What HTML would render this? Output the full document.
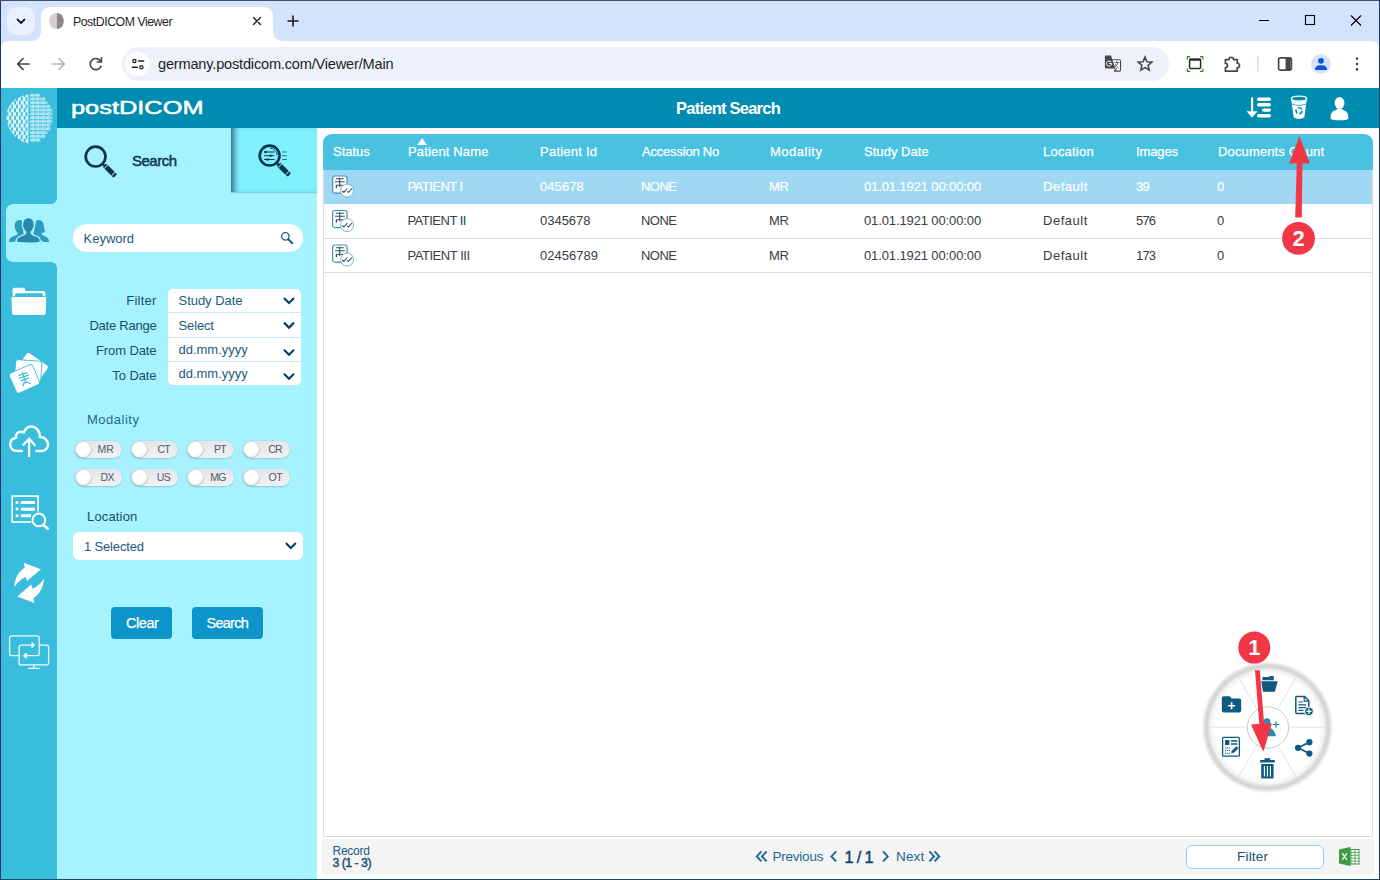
<!DOCTYPE html>
<html lang="en">
<head>
<meta charset="utf-8">
<title>PostDICOM Viewer</title>
<style>
*{box-sizing:border-box;margin:0;padding:0}
html,body{width:1380px;height:880px;overflow:hidden;background:#fff}
body{font-family:"Liberation Sans",sans-serif;position:relative;color:#1f1f1f}
body>div,body>svg{position:absolute}
.t{position:absolute;line-height:1;white-space:nowrap;transform:translateY(-0.8465em)}
.r{transform:translate(-100%,-0.8465em)}
/* ---------- browser chrome ---------- */
#tabstrip{left:0;top:0;width:1380px;height:52px;background:#d3e3fd}
#toolbar{left:1px;top:41px;width:1378px;height:47px;background:#fff;border-radius:7px 7px 0 0}
#winL{left:0;top:0;width:1px;height:880px;background:#1b3a63}
#winT{left:0;top:0;width:1380px;height:1px;background:#3f506b}
#winR{left:1379px;top:0;width:1px;height:880px;background:#1b3a63}
#winB{left:0;top:879px;width:1380px;height:1px;background:#134a66}
#tabsearch{left:7px;top:7px;width:28px;height:28px;border-radius:10px;background:#eaf1fe}
#tab{left:41px;top:7px;width:232px;height:34px;background:#fff;border-radius:9px 9px 0 0}
#tab:before,#tab:after{content:"";position:absolute;bottom:0;width:9px;height:9px}
#tab:before{left:-9px;background:radial-gradient(circle at 0 0,transparent 8.5px,#fff 9px)}
#tab:after{right:-9px;background:radial-gradient(circle at 100% 0,transparent 8.5px,#fff 9px)}
#omni{left:122px;top:47px;width:1047px;height:34px;border-radius:17px;background:#edf1fa}
#omnichip{left:125.200px;top:52px;width:24.400px;height:24.400px;border-radius:12.200px;background:#fff}
/* ---------- app ---------- */
#side{left:1px;top:88px;width:56px;height:791px;background:#38bddd}
#hdr{left:57px;top:88px;width:1322px;height:40px;background:#008cb0}
#panel{left:57px;top:128px;width:260px;height:751px;background:#a6f2fe}
#tab2{left:231px;top:128px;width:86px;height:64px;background:#7ff1fd;box-shadow:inset 7px 0 6px -4px rgba(0,50,70,.7),0 1px 1px rgba(0,60,80,.2)}
#sact{left:5.5px;top:204px;width:52.5px;height:58px;background:#a6f2fe;border-radius:7px 0 0 7px}
#tbl{left:322.500px;top:133.600px;width:1050.500px;height:703.400px;border:1px solid #d9dee2;border-radius:9px 9px 0 0;background:#fff}
#thead{left:322.500px;top:133.600px;width:1050.500px;height:36.400px;background:#48c2e0;border-radius:9px 9px 0 0}
.row{left:323.500px;width:1048.500px;height:35px;border-bottom:1px solid #d9dee2}
#row1{top:170px;height:33.500px;background:#a0d8f3;border-bottom:none}
#foot{left:322px;top:839px;width:1052px;height:35px;background:#f4f4f4}
.h{color:#fff;font-size:13px;-webkit-text-stroke:0.25px #fff}
.c{color:#383d44;font-size:13px}
.w{color:#fff;-webkit-text-stroke:0.2px #fff}
.l{color:#17506c;font-size:13px}
.v{color:#1b5a7e;font-size:13px}
.btn{background:#0d94c9;border-radius:4px}
.pill{width:47px;height:16.5px;border-radius:8.5px;background:linear-gradient(#e4e6e8,#f1f2f3);box-shadow:0 0.5px 1.5px rgba(0,40,60,.3)}
.pill:before{content:"";position:absolute;left:0.5px;top:0.5px;width:15.5px;height:15.5px;border-radius:8px;background:radial-gradient(circle at 40% 35%,#fff 50%,#e9e9e9 100%);box-shadow:0 0.5px 2px rgba(0,0,0,.4)}
.pt{font-size:10.5px;color:#4a6070}
</style>
</head>
<body>
<!-- ================= browser chrome ================= -->
<div id="tabstrip"></div>
<div id="tabsearch"></div>
<div id="tab"></div>
<div id="toolbar"></div>
<div id="omni"></div>
<div id="omnichip"></div>
<div class="t" style="left:73px;top:26px;font-size:12.3px;color:#1f1f1f;letter-spacing:-0.46px">PostDICOM Viewer</div>
<div class="t" style="left:158px;top:69px;font-size:14.6px;color:#1f1f1f;letter-spacing:-0.20px">germany.postdicom.com/Viewer/Main</div>

<!-- ================= app backgrounds ================= -->
<div id="side"></div>
<div id="sact"></div>
<div id="hdr"></div>
<div id="panel"></div>
<div id="tab2"></div>
<div id="tbl"></div>
<div id="thead"></div>
<div class="row" id="row1"></div>
<div class="row" style="top:204px"></div>
<div class="row" style="top:238px"></div>
<div id="foot"></div>
<!-- ================= app text ================= -->
<div class="t" id="brand" style="left:71.4px;top:113.600px;font-size:18px;color:#fff;-webkit-text-stroke:0.5px #fff;transform-origin:0 0;transform:translateY(-0.8465em) scaleX(1.41)">postDICOM</div>
<div class="t" style="left:676px;top:114px;font-size:16.5px;font-weight:bold;color:#fff;letter-spacing:-0.76px">Patient Search</div>
<div class="t" style="left:132px;top:166px;font-size:15px;-webkit-text-stroke:0.45px #0c3550;color:#0c3550;letter-spacing:-0.51px">Search</div>

<div class="t h" style="left:333px;top:156px;letter-spacing:-0.03px">Status</div>
<div class="t h" style="left:408px;top:156px;letter-spacing:0.15px">Patient Name</div>
<div class="t h" style="left:540px;top:156px;letter-spacing:0.24px">Patient Id</div>
<div class="t h" style="left:642px;top:156px;letter-spacing:-0.20px">Accession No</div>
<div class="t h" style="left:770px;top:156px;letter-spacing:0.51px">Modality</div>
<div class="t h" style="left:864px;top:156px;letter-spacing:0.04px">Study Date</div>
<div class="t h" style="left:1043px;top:156px;letter-spacing:0.21px">Location</div>
<div class="t h" style="left:1136px;top:156px;letter-spacing:-0.13px">Images</div>
<div class="t h" style="left:1218px;top:156px;letter-spacing:0.14px">Documents Count</div>

<div class="t c w" style="left:407.4px;top:190.5px;letter-spacing:-0.52px">PATIENT I</div>
<div class="t c w" style="left:540px;top:190.5px;letter-spacing:0.08px">045678</div>
<div class="t c w" style="left:641px;top:190.5px;letter-spacing:-0.52px">NONE</div>
<div class="t c w" style="left:769px;top:190.5px;letter-spacing:-0.42px">MR</div>
<div class="t c w" style="left:864px;top:190.5px;letter-spacing:-0.12px">01.01.1921 00:00:00</div>
<div class="t c w" style="left:1043px;top:190.5px;letter-spacing:0.52px">Default</div>
<div class="t c w" style="left:1136px;top:190.5px;letter-spacing:-0.70px">39</div>
<div class="t c w" style="left:1217px;top:190.5px">0</div>

<div class="t c" style="left:407.4px;top:225px;letter-spacing:-0.50px">PATIENT II</div>
<div class="t c" style="left:540px;top:225px;letter-spacing:-0.02px">0345678</div>
<div class="t c" style="left:641px;top:225px;letter-spacing:-0.52px">NONE</div>
<div class="t c" style="left:769px;top:225px;letter-spacing:-0.42px">MR</div>
<div class="t c" style="left:864px;top:225px;letter-spacing:-0.12px">01.01.1921 00:00:00</div>
<div class="t c" style="left:1043px;top:225px;letter-spacing:0.52px">Default</div>
<div class="t c" style="left:1136px;top:225px;letter-spacing:-0.85px">576</div>
<div class="t c" style="left:1217px;top:225px">0</div>

<div class="t c" style="left:407.4px;top:259.5px;letter-spacing:-0.45px">PATIENT III</div>
<div class="t c" style="left:540px;top:259.5px;letter-spacing:0.01px">02456789</div>
<div class="t c" style="left:641px;top:259.5px;letter-spacing:-0.52px">NONE</div>
<div class="t c" style="left:769px;top:259.5px;letter-spacing:-0.42px">MR</div>
<div class="t c" style="left:864px;top:259.5px;letter-spacing:-0.12px">01.01.1921 00:00:00</div>
<div class="t c" style="left:1043px;top:259.5px;letter-spacing:0.52px">Default</div>
<div class="t c" style="left:1136px;top:259.5px;letter-spacing:-0.85px">173</div>
<div class="t c" style="left:1217px;top:259.5px">0</div>

<div class="t" style="left:332.5px;top:855px;font-size:12px;color:#1d5a80;letter-spacing:-0.24px">Record</div>
<div class="t" style="left:332.5px;top:867px;font-size:12.3px;-webkit-text-stroke:0.4px #164a6a;color:#164a6a;letter-spacing:-0.51px">3 (1 - 3)</div>
<div class="t" style="left:772.5px;top:861px;font-size:13.5px;color:#1a6890;letter-spacing:-0.23px">Previous</div>
<div class="t" style="left:844.5px;top:862.5px;font-size:16.3px;-webkit-text-stroke:0.45px #0f4866;color:#0f4866;letter-spacing:-0.65px">1 / 1</div>
<div class="t" style="left:896px;top:861px;font-size:13.5px;color:#1a6890;letter-spacing:0.14px">Next</div>
<div style="left:1186px;top:845px;width:138px;height:24px;border:1px solid #8fd4f7;border-radius:6px;background:#fff"></div>
<div class="t" style="left:1237px;top:861px;font-size:13.5px;color:#17506c;letter-spacing:0.20px">Filter</div>

<!-- ================= search form ================= -->
<div style="left:73px;top:224px;width:230px;height:28px;border-radius:14px;background:#fff"></div>
<div class="t v" style="left:83.5px;top:243px;letter-spacing:0.00px">Keyword</div>
<div style="left:168px;top:289px;width:133px;height:96px;border-radius:5px;background:#fff"></div>
<div style="left:168px;top:312px;width:133px;height:1px;background:#bfeaff"></div>
<div style="left:168px;top:336.700px;width:133px;height:1px;background:#bfeaff"></div>
<div style="left:168px;top:361px;width:133px;height:1px;background:#bfeaff"></div>
<div class="t l r" style="left:156.5px;top:304.5px;letter-spacing:0.22px">Filter</div>
<div class="t l r" style="left:156.5px;top:330px;letter-spacing:-0.23px">Date Range</div>
<div class="t l r" style="left:156.5px;top:354.5px;letter-spacing:-0.09px">From Date</div>
<div class="t l r" style="left:156.5px;top:379.5px;letter-spacing:-0.09px">To Date</div>
<div class="t v" style="left:178.5px;top:304.5px;letter-spacing:-0.03px">Study Date</div>
<div class="t v" style="left:178.5px;top:330px;letter-spacing:-0.13px">Select</div>
<div class="t v" style="left:178.5px;top:353.5px;letter-spacing:-0.02px">dd.mm.yyyy</div>
<div class="t v" style="left:178.5px;top:377.5px;letter-spacing:-0.02px">dd.mm.yyyy</div>
<div class="t" style="left:87px;top:424px;font-size:13px;color:#1d6a8e;letter-spacing:0.50px">Modality</div>
<div class="pill" style="left:75.3px;top:441px"></div>
<div class="pill" style="left:131px;top:441px"></div>
<div class="pill" style="left:187px;top:441px"></div>
<div class="pill" style="left:243px;top:441px"></div>
<div class="pill" style="left:75.3px;top:469px"></div>
<div class="pill" style="left:131px;top:469px"></div>
<div class="pill" style="left:187px;top:469px"></div>
<div class="pill" style="left:243px;top:469px"></div>
<div class="t pt r" style="left:114px;top:453px;letter-spacing:0.06px">MR</div>
<div class="t pt r" style="left:170px;top:453px;letter-spacing:-0.70px">CT</div>
<div class="t pt r" style="left:226px;top:453px;letter-spacing:-0.70px">PT</div>
<div class="t pt r" style="left:282px;top:453px;letter-spacing:-0.70px">CR</div>
<div class="t pt r" style="left:114px;top:481px;letter-spacing:-0.49px">DX</div>
<div class="t pt r" style="left:170px;top:481px;letter-spacing:-0.69px">US</div>
<div class="t pt r" style="left:226px;top:481px;letter-spacing:-0.52px">MG</div>
<div class="t pt r" style="left:282px;top:481px;letter-spacing:-0.59px">OT</div>
<div class="t" style="left:87px;top:521px;font-size:13px;color:#17506c;letter-spacing:0.16px">Location</div>
<div style="left:73px;top:532px;width:230px;height:28px;border-radius:6px;background:#fff"></div>
<div class="t v" style="left:84px;top:550.7px;letter-spacing:-0.16px">1 Selected</div>
<div class="btn" style="left:111px;top:607px;width:61px;height:32px"></div>
<div class="btn" style="left:192px;top:607px;width:71px;height:32px"></div>
<div class="t" style="left:126px;top:628px;font-size:14.5px;color:#fff;-webkit-text-stroke:0.25px #fff;letter-spacing:-0.44px">Clear</div>
<div class="t" style="left:206.5px;top:628px;font-size:14.5px;color:#fff;-webkit-text-stroke:0.25px #fff;letter-spacing:-0.75px">Search</div>

<svg width="1380" height="880" viewBox="0 0 1380 880" style="left:0;top:0" fill="none">
<g id="chrome-icons" stroke-linecap="round" stroke-linejoin="round">
<!-- tab search chevron -->
<path d="M17.5 19.5 L21 23 L24.5 19.5" stroke="#1f1f1f" stroke-width="1.8"/>
<!-- favicon -->
<defs><radialGradient id="fpk" cx="0.5" cy="0.5" r="0.5"><stop offset="0" stop-color="#f4b8c0"/><stop offset="1" stop-color="#f4b8c0" stop-opacity="0"/></radialGradient></defs>
<ellipse cx="56.400" cy="21" rx="7.300" ry="8" fill="#d3d1d2"/>
<path d="M56.900 13 C61 13 63.700 16.600 63.700 21 C63.700 25.400 61 29 56.900 29 Z" fill="#8b8b8c"/>
<ellipse cx="53" cy="20" rx="3.200" ry="3" fill="url(#fpk)"/>
<circle cx="60" cy="19.500" r="1.500" fill="#d95c68"/>
<!-- tab close -->
<path d="M253.500 17.500 L260.500 24.500 M260.500 17.500 L253.500 24.500" stroke="#1f1f1f" stroke-width="1.400"/>
<!-- new tab plus -->
<path d="M288 21 H298 M293 16 V26" stroke="#1f1f1f" stroke-width="1.6"/>
<!-- window controls -->
<path d="M1259 20.5 H1269" stroke="#000" stroke-width="1" stroke-linecap="butt"/>
<rect x="1305.5" y="15.5" width="9" height="9" stroke="#000" stroke-width="1.1" stroke-linejoin="miter"/>
<path d="M1351 15.5 L1361 25.5 M1361 15.5 L1351 25.5" stroke="#000" stroke-width="1.1" stroke-linecap="butt"/>
<!-- back / forward / reload -->
<path d="M29 64 H17.8 M23 58.6 L17.6 64 L23 69.4" stroke="#474747" stroke-width="1.7"/>
<path d="M53 64 H64.2 M59 58.6 L64.4 64 L59 69.4" stroke="#b4b4b4" stroke-width="1.7"/>
<path d="M100.6 61.2 A5.6 5.6 0 1 0 101 66.2" stroke="#474747" stroke-width="1.7"/>
<path d="M101.4 57.8 V62 H97.2" stroke="#474747" stroke-width="1.7"/>
<!-- site settings (tune) -->
<circle cx="134.400" cy="61" r="1.600" stroke="#1f1f1f" stroke-width="1.300"/>
<path d="M138.600 61 H143.600" stroke="#1f1f1f" stroke-width="1.500"/>
<circle cx="141.400" cy="67.200" r="1.600" stroke="#1f1f1f" stroke-width="1.300"/>
<path d="M132.400 67.200 H137.300" stroke="#1f1f1f" stroke-width="1.500"/>
<!-- translate -->
<path d="M1106 55.600 H1111 L1115.400 68.600 H1106 Q1104.900 68.600 1104.900 67.500 V56.700 Q1104.900 55.600 1106 55.600 Z" fill="#474747"/>
<path d="M1112.600 59.800 H1119.400 Q1120.500 59.800 1120.500 60.900 V70 Q1120.500 71.100 1119.400 71.100 H1114.400 L1116.400 68.600" fill="#fff" stroke="#474747" stroke-width="1.100"/>
<path d="M1110.900 61.800 A2.600 2.600 0 1 0 1111.600 63.600 H1109.200" stroke="#fff" stroke-width="1" fill="none"/>
<path d="M1114.600 62.600 H1119 M1116.800 61.600 V62.600 M1118 62.800 Q1117 66 1114.600 67.600 M1115.400 64.400 Q1116.400 66.400 1118.600 68.200" stroke="#474747" stroke-width="0.800" fill="none"/>
<!-- star -->
<path d="M1145.00 57.10 L1146.91 61.67 L1151.85 62.08 L1148.09 65.30 L1149.23 70.12 L1145.00 67.55 L1140.77 70.12 L1141.91 65.30 L1138.15 62.08 L1143.09 61.67 Z" stroke="#474747" stroke-width="1.550" stroke-linejoin="miter"/>
<!-- screenshot extension -->
<rect x="1189.6" y="59.8" width="11" height="8.6" rx="0.8" stroke="#2b2b2b" stroke-width="1.5"/>
<path d="M1189.4 59.4 H1200.8" stroke="#2b2b2b" stroke-width="2.2" stroke-linecap="butt"/>
<path d="M1187.4 59.4 V56.6 H1190.2 M1200 56.6 H1202.8 V59.4 M1202.8 68.6 V71.4 H1200 M1190.2 71.4 H1187.4 V68.6" stroke="#2e8b2e" stroke-width="1.2" stroke-linecap="butt" stroke-linejoin="miter"/>
<!-- extensions puzzle -->
<path d="M1225.4 59.6 H1229 A2.3 2.3 0 0 1 1233.6 59.6 H1237.2 V63.2 A2.3 2.3 0 0 1 1237.2 67.8 V71.2 H1225.4 V67.6 A2 2 0 0 0 1225.4 63.4 Z" stroke="#474747" stroke-width="1.7"/>
<!-- separator -->
<path d="M1258 56.5 V71" stroke="#c7d7f5" stroke-width="1.4"/>
<!-- side panel -->
<rect x="1278.6" y="57.8" width="12.8" height="12.4" rx="1.6" stroke="#474747" stroke-width="1.7"/>
<path d="M1285.6 58 H1290.6 V70 H1285.6 Z" fill="#474747"/>
<!-- profile -->
<circle cx="1321" cy="64" r="10" fill="#d3e3fd"/>
<circle cx="1321" cy="60.8" r="2.9" fill="#0b57d0"/>
<path d="M1315 69.6 Q1315 65.2 1321 65.2 Q1327 65.2 1327 69.6 V70 H1315 Z" fill="#0b57d0"/>
<!-- menu dots -->
<circle cx="1357" cy="58.6" r="1.3" fill="#474747"/><circle cx="1357" cy="64" r="1.3" fill="#474747"/><circle cx="1357" cy="69.4" r="1.3" fill="#474747"/>
</g>
<defs>
<pattern id="pdots" x="6.400" y="93.200" width="4.800" height="7.600" patternUnits="userSpaceOnUse"><g fill="none" stroke="#fff"><circle cx="1.200" cy="1.900" r="1.200" stroke-width="1.300"/><circle cx="3.600" cy="5.700" r="1.200" stroke-width="1.300"/><path d="M2 2.700 L2.800 4.900 M0.400 2.700 L-0.400 4.900 M5.200 2.700 L4.400 4.900 M2.800 6.500 L2 8.700 M4.400 6.500 L5.200 8.700 M2 1.100 L2.800 -1.100 M0.400 1.100 L-0.400 -1.100" stroke-width="0.600" opacity="0.800"/></g></pattern>
<pattern id="pbits" x="30" y="93.600" width="5.100" height="3.740" patternUnits="userSpaceOnUse"><rect x="0.300" y="0.300" width="0.950" height="2.700" fill="#fff"/><rect x="2.250" y="0.650" width="2" height="2" rx="0.500" fill="none" stroke="#fff" stroke-width="0.850"/></pattern>
<clipPath id="cbl"><path d="M28.600 94.500 C22 95 14 99 10 105 C6.500 110.500 5.200 117 7.400 124 C9.400 130 14 136 19 139.500 C22 141.500 25 143 28.600 143.400 Z"/></clipPath>
<clipPath id="cbr"><path d="M29.800 93.400 H40.200 V97.200 H45.200 V100.900 H47.400 V104.700 H50.400 V108.400 H52.200 V123.400 H50.400 V130.800 H47.400 V134.600 H45.200 V138.300 H40.200 V142.200 H29.800 Z"/></clipPath>
</defs>
<g id="side-icons">
<rect x="5" y="92" width="26" height="52" fill="url(#pdots)" clip-path="url(#cbl)"/>
<rect x="30" y="92" width="24" height="52" fill="url(#pbits)" clip-path="url(#cbr)"/>
<!-- inverse corners of active item -->
<path d="M57 198 V204 H51 A6 6 0 0 0 57 198 Z M57 268 V262 H51 A6 6 0 0 1 57 268 Z" fill="#a6f2fe"/>
<!-- people (active) -->
<g fill="#2d9dbd">
<path d="M9 242 C9 238 11.600 236.800 14.600 235.800 C17 235 17.800 234.200 17.600 233 C16.400 231.600 15.400 229.800 15.200 228.200 C14.400 228 14.300 226.600 14.800 226 C14.600 222.600 16.400 220 19.600 220 C20.400 220 21 220.100 21.600 220.300 L24 236 L14 242 Z"/>
<path d="M49.100 242 C49.100 238 46.400 236.600 43.400 235.400 C42 234.800 41.400 234 41.600 233 C43 232.700 44.400 232.200 45.300 231.200 C44.200 229.600 44 227.400 43.800 225.400 C43.600 222 41.600 220 38.800 220 C37.800 220 37 220.200 36.200 220.500 L33 236 L44 242 Z"/>
</g>
<path d="M16.300 241.200 C16.300 238 17.600 236.800 21 235.800 C24 235 26 234.400 25.800 232.200 C24.600 230.800 23.600 229.200 23.200 227.600 C22.200 227.400 22 225.800 22.600 224.800 C22.400 220.600 24.400 217.700 28.400 217.700 C32.400 217.700 34.400 220.600 34.200 224.800 C34.800 225.800 34.600 227.400 33.600 227.600 C33.200 229.200 32.200 230.800 31 232.200 C30.800 234.400 32.800 235 35.800 235.800 C39.200 236.800 40.400 238 40.400 241.200 C40.400 243.800 16.300 243.800 16.300 241.200 Z" fill="#2788ab" stroke="#a6f2fe" stroke-width="1.300"/>
<!-- folder -->
<g fill="#fff">
<path d="M12.600 296.200 V289.700 Q12.600 287.700 14.600 287.700 H23.400 Q25 287.700 25 289.300 V291 H43 Q45.400 291 45.400 293.400 V296.200 H43 V295.300 Q43 293.300 41 293.300 H16.900 Q14.900 293.300 14.900 295.300 V296.200 Z"/>
<path d="M11.400 296.900 H46.300 L45.700 313.300 Q45.600 314.900 44 314.900 H13.800 Q12.200 314.900 12.100 313.300 Z"/>
</g>
<!-- xray cards -->
<g fill="#fff">
<rect x="-12.800" y="-10.800" width="25.600" height="21.600" rx="2.200" transform="translate(32.100 368.200) rotate(35.400)"/>
<rect x="-13.200" y="-10.400" width="26.400" height="20.800" rx="2.600" transform="translate(28.200 370.800) rotate(4)" stroke="#38bddd" stroke-width="0.900"/>
<rect x="-12.700" y="-10.900" width="25.400" height="21.800" rx="2.600" transform="translate(24.500 378.900) rotate(-24)" stroke="#38bddd" stroke-width="0.900"/>
</g>
<g transform="translate(24.500 378.800) rotate(-18)" stroke="#38bddd" stroke-width="1.150" stroke-linecap="round" fill="none">
<path d="M0 -6.800 V4.200"/><path d="M-4.400 -5 H4.400 M-5 -2.200 H5 M-4 0.600 H4"/><path d="M-3.400 6.400 Q-3 3.800 0 3.800 Q3 3.800 3.600 6.200"/>
</g>
<!-- cloud upload -->
<g stroke="#fff" stroke-width="2.400" stroke-linecap="butt" stroke-linejoin="round" fill="none">
<path d="M22.900 451 H17 C13 451 10.200 448 10.200 444.400 C10.200 441 12.600 438.400 16 437.800 C15.400 434.400 17.600 431.800 20.600 431.800 C21.800 431.800 22.800 432 23.800 432.400 C25.400 428.800 27.800 426.500 30.800 426.500 C35.800 426.500 39.900 430.600 40 437 C44.400 437 48 440 48 444.400 C48 448 45.400 451 41.600 451 H35.300"/>
<path d="M29.100 457 V439.600 M22.800 445.400 L29.200 438.600 L35.400 445.800" stroke-width="2.200" stroke-linejoin="miter"/>
</g>
<!-- list search -->
<g stroke="#fff" fill="none">
<rect x="12.200" y="496.100" width="25.900" height="25.900" stroke-width="1.650"/>
<path d="M20.800 502.500 H35 M20.800 509.200 H35 M20.800 515.800 H31" stroke-width="2.900"/>
<circle cx="17" cy="502.600" r="1.500" fill="#fff" stroke="none"/><circle cx="17" cy="509.100" r="1.500" fill="#fff" stroke="none"/><circle cx="17" cy="515.700" r="1.500" fill="#fff" stroke="none"/>
<circle cx="38.900" cy="519.900" r="8.300" fill="#38bddd" stroke="none"/>
<circle cx="38.900" cy="519.900" r="6.350" stroke-width="2.100"/>
<path d="M43.800 525.200 L47.600 528.600" stroke-width="2.800" stroke-linecap="round"/>
</g>
<!-- sync arrows -->
<g fill="#fff">
<path id="sarr" d="M23.800 562.700 L40.900 569.200 L27 581 L25.600 576.900 C21 579 17 582.600 14.300 586.900 C14.600 578.500 18.600 571.400 24.700 567.700 Z"/>
<use href="#sarr" transform="rotate(180 29.100 582.800)"/>
</g>
<!-- monitors -->
<g stroke="#fff" stroke-width="1.300" fill="none" stroke-linejoin="round" stroke-linecap="round" opacity="0.920">
<path d="M18.400 655.700 H11.800 Q9.600 655.700 9.600 653.500 V638.100 Q9.600 635.900 11.800 635.900 H37 Q39.200 635.900 39.200 638.100 V653.500 Q39.200 655.700 37 655.700 H25"/>
<path d="M33 645.100 H21.300 Q19.100 645.100 19.100 647.300 V662.700 Q19.100 664.900 21.300 664.900 H46.400 Q48.600 664.900 48.600 662.700 V647.300 Q48.600 645.100 46.400 645.100 H39.900"/>
<path d="M33.800 664.900 V668.400 M28.500 668.400 H39.200"/>
<path d="M32 642.800 L34.300 645.100 L32 647.400 Z M26.200 653.400 L23.900 655.700 L26.200 658 Z" fill="#fff"/>
</g>
</g>
<g id="hdr-icons" fill="#fff">
<!-- sort -->
<rect x="1251" y="97.600" width="2.200" height="15" />
<path d="M1246.600 111.200 H1257.600 L1252.100 117.800 Z"/>
<rect x="1257" y="97.600" width="14" height="3.500" rx="1.750"/>
<rect x="1257" y="103" width="14" height="3.400" rx="1.700"/>
<rect x="1262" y="108.400" width="9" height="3.400" rx="1.700"/>
<rect x="1257" y="114" width="14" height="3.600" rx="1.800"/>
<!-- recycle bin -->
<path d="M1291.200 99.600 L1293.700 117.600 Q1299 120.200 1304.300 117.600 L1306.800 99.600 Q1299 103.200 1291.200 99.600 Z" fill="#fff"/>
<ellipse cx="1299" cy="98.600" rx="7.700" ry="2.500" fill="#008cb0" stroke="#fff" stroke-width="1.300"/>
<path d="M1292 104.200 Q1299 106.800 1306 104.200" stroke="#008cb0" stroke-width="0.700" fill="none"/>
<circle cx="1299" cy="110.800" r="3" stroke="#008cb0" stroke-width="1.600" stroke-dasharray="4.300 2" fill="none"/>
<!-- user -->
<ellipse cx="1339.500" cy="103" rx="4.900" ry="6"/>
<path d="M1330.600 118.400 C1330.600 112.600 1332.600 111 1336 110 L1337.600 108.600 H1341.400 L1343 110 C1346.400 111 1348.400 112.600 1348.400 118.400 Q1348.400 120.200 1339.500 120.200 Q1330.600 120.200 1330.600 118.400 Z"/>
</g>
<g id="panel-icons">
<!-- big magnifier -->
<circle cx="95.600" cy="156.600" r="9.900" stroke="#0c3550" stroke-width="2.700"/>
<path d="M102.200 163.500 L105.600 166.800" stroke="#0c3550" stroke-width="2.200"/>
<g transform="translate(104.600 165.400) rotate(44.400)"><rect x="-0.300" y="-2.500" width="15.400" height="5" rx="1.500" fill="#0c3550"/><rect x="1.500" y="-2.500" width="0.800" height="5" fill="#a6f2fe"/><rect x="11.800" y="-2.500" width="0.800" height="5" fill="#a6f2fe"/></g>
<!-- advanced search magnifier -->
<circle cx="269.600" cy="155.600" r="9.900" stroke="#0c3550" stroke-width="2.700"/>
<path d="M276.200 162.500 L279.600 165.800" stroke="#0c3550" stroke-width="2.200"/>
<g transform="translate(278.600 164.400) rotate(44.400)"><rect x="-0.300" y="-2.500" width="15.400" height="5" rx="1.500" fill="#0c3550"/><rect x="1.500" y="-2.500" width="0.800" height="5" fill="#7ff1fd"/><rect x="11.800" y="-2.500" width="0.800" height="5" fill="#7ff1fd"/></g>
<path d="M264 152 H274.400 M264 155.700 H274.400 M264 159.500 H274.400" stroke="#0c3550" stroke-width="1"/>
<circle cx="265.600" cy="152" r="1.200" fill="#0c3550"/><circle cx="270.600" cy="155.700" r="1.200" fill="#0c3550"/><circle cx="267.600" cy="159.500" r="1.200" fill="#0c3550"/>
<path d="M270 148.200 A7.400 7.400 0 0 1 277 155" stroke="#0c3550" stroke-width="0.800"/>
<path d="M282 152 H287 M282 155.700 H287 M282 159.500 H287" stroke="#2d7f96" stroke-width="1.100"/>
<!-- small search in keyword -->
<circle cx="285.400" cy="236.400" r="3.700" stroke="#1d5a80" stroke-width="1.300"/>
<path d="M288.200 239.200 L292.400 243.200" stroke="#1d5a80" stroke-width="1.900" stroke-linecap="round"/>
<!-- chevrons -->
<g stroke="#0c4160" stroke-width="2.200" stroke-linecap="butt" stroke-linejoin="miter">
<path d="M284 298 L289 303 L294 298"/>
<path d="M284 322.600 L289 327.600 L294 322.600"/>
<path d="M284 349.800 L289 354.800 L294 349.800"/>
<path d="M284 373.800 L289 378.800 L294 373.800"/>
<path d="M285.800 543 L290.800 548 L295.800 543"/>
</g>
</g>
<defs><g id="sticon">
<rect x="0.600" y="0.500" width="14.500" height="17.100" rx="2.200" fill="#fff" stroke="#3d8fbc" stroke-width="1.150"/>
<path d="M7.700 2.200 V11.600 M4 3.200 H11.800 M3 6.300 H12.800 M4.200 9.750 H11.200" stroke="#3a4a5c" stroke-width="1.050"/>
<path d="M4.400 9.800 V12.600" stroke="#3a4a5c" stroke-width="1.300"/>
<circle cx="15.070" cy="15.070" r="6.500" fill="#fff" stroke="#6aaed0" stroke-width="0.900"/>
<path d="M10.200 15.300 L11.800 16.900 L15.300 13 M15.100 16.100 L16.500 16.900 L20 13" stroke="#3a4a5c" stroke-width="1.100" fill="none"/>
</g></defs>
<g id="table-icons">
<path d="M417.400 145 L422.200 138 L427 145 Z" fill="#fff"/>
<use href="#sticon" x="332" y="175.500"/>
<use href="#sticon" x="332" y="210"/>
<use href="#sticon" x="332" y="244.500"/>
</g>
<g id="foot-icons" stroke="#1a6890" stroke-width="1.900" stroke-linejoin="miter">
<path d="M761.400 851.400 L756.800 856.400 L761.400 861.400 M766.600 851.400 L762 856.400 L766.600 861.400"/>
<path d="M836.200 851.400 L831.400 856.400 L836.200 861.400"/>
<path d="M883 851.400 L887.800 856.400 L883 861.400"/>
<path d="M929.400 851.400 L934 856.400 L929.400 861.400 M934.600 851.400 L939.200 856.400 L934.600 861.400"/>
</g>
<g id="excel">
<rect x="1348" y="849.500" width="11" height="14.500" fill="#fff" stroke="#3f9a45" stroke-width="1"/>
<path d="M1351 849.500 V864 M1355 849.500 V864 M1348 852.400 H1359 M1348 855.300 H1359 M1348 858.200 H1359 M1348 861.100 H1359" stroke="#3f9a45" stroke-width="0.800"/>
<path d="M1339 849.400 L1350.500 847 V866 L1339 863.600 Z" fill="#3f9a45"/>
<path d="M1342.200 853.200 L1347 860 M1347 853.200 L1342.200 860" stroke="#fff" stroke-width="1.300"/>
</g>
<defs>
<radialGradient id="rsh" gradientUnits="userSpaceOnUse" cx="1267.300" cy="727.200" r="66"><stop offset="0.780" stop-color="#000" stop-opacity="0"/><stop offset="0.860" stop-color="#000" stop-opacity="0.045"/><stop offset="0.915" stop-color="#000" stop-opacity="0.170"/><stop offset="0.940" stop-color="#000" stop-opacity="0.150"/><stop offset="1" stop-color="#000" stop-opacity="0"/></radialGradient>
</defs>
<g id="radial">
<circle cx="1267.300" cy="727.200" r="60.500" fill="#fff"/>
<circle cx="1267.300" cy="727.200" r="66" fill="url(#rsh)"/>
<g stroke="#dcdcdc" stroke-width="0.800">
<path d="M1207.700 727.200 H1326.900 M1237.500 675.600 L1297.100 778.800 M1297.100 675.600 L1237.500 778.800"/>
</g>
<circle cx="1268" cy="727.500" r="20.600" fill="#fff" stroke="#c4c4c4" stroke-width="0.900"/>
<g fill="#0e5a80">
<!-- open folder (top) -->
<path d="M1262.400 680.200 V678 Q1262.400 677 1263.400 677 H1269 L1269.800 675.900 H1273 Q1273.800 675.900 1273.800 676.700 V680.200 Z"/>
<path d="M1261.250 681.200 H1277.700 L1275 691.200 Q1274.800 691.800 1274.200 691.800 H1263.600 Q1263 691.800 1262.900 691.200 Z"/>
<!-- folder plus (top-left) -->
<path d="M1221.800 698 Q1221.800 696.200 1223.600 696.200 H1228.800 Q1229.800 696.200 1230.400 697 L1231.600 698.600 H1239.400 Q1241.200 698.600 1241.200 700.400 V710.600 Q1241.200 712.400 1239.400 712.400 H1223.600 Q1221.800 712.400 1221.800 710.600 Z"/>
<path d="M1231.600 702.200 V709.200 M1228.100 705.700 H1235.100" stroke="#fff" stroke-width="1.600"/>
<!-- trash (bottom) -->
<path d="M1264.600 758.200 H1270.200 V760 H1264.600 Z"/>
<rect x="1260" y="760" width="14.800" height="2.600" rx="0.600"/>
<path d="M1261.200 764 H1273.600 V777.400 Q1273.600 778.600 1272.400 778.600 H1262.400 Q1261.200 778.600 1261.200 777.400 Z"/>
<path d="M1264.400 766 V776.400 M1267.400 766 V776.400 M1270.400 766 V776.400" stroke="#fff" stroke-width="1.100"/>
<!-- share (bottom-right) -->
<circle cx="1298" cy="747.800" r="3.100"/><circle cx="1309.400" cy="742.200" r="3.100"/><circle cx="1309.400" cy="753.600" r="3.100"/>
<path d="M1298 747.800 L1309.400 742.200 M1298 747.800 L1309.400 753.600" stroke="#0e5a80" stroke-width="1.700"/>
</g>
<!-- doc plus (top-right) -->
<g fill="none" stroke="#0e5a80">
<path d="M1295.800 697.400 Q1295.800 696.600 1296.600 696.600 H1304.600 L1308.800 700.800 V712.600 Q1308.800 713.400 1308 713.400 H1296.600 Q1295.800 713.400 1295.800 712.600 Z" stroke-width="1.500"/>
<path d="M1304.200 696.800 V701.200 H1308.600" stroke-width="1.200"/>
<path d="M1298.400 702 H1303 M1298.400 704.800 H1306.200 M1298.400 707.600 H1306.200 M1298.400 710.400 H1303.400" stroke-width="1.200"/>
<circle cx="1309" cy="711.400" r="4.300" fill="#0e5a80" stroke="#fff" stroke-width="1"/>
<path d="M1309 708.800 V714 M1306.400 711.400 H1311.600" stroke="#fff" stroke-width="1.300"/>
</g>
<!-- form edit (bottom-left) -->
<g fill="none" stroke="#0e5a80">
<rect x="1222.600" y="737.400" width="16.800" height="18.800" rx="1" stroke-width="1.300"/>
<rect x="1225" y="740" width="4.400" height="5" fill="#0e5a80" stroke="none"/>
<path d="M1231 741 H1237.400 M1231 744 H1237.400" stroke-width="1.500"/>
<path d="M1225 748 H1230 M1225 750.600 H1230 M1225 753.200 H1230" stroke-width="1" stroke-dasharray="1.200 0.700"/>
<path d="M1231.600 753 L1232.200 750.600 L1236.600 746.600 L1238.200 748.200 L1234 752.400 Z" fill="#0e5a80" stroke-width="0.600"/>
</g>
<!-- center: add patient -->
<g fill="#2a8cb0">
<circle cx="1267" cy="721.600" r="3.300"/>
<path d="M1260.600 736.200 Q1261 727.600 1267.600 727.600 Q1274.400 727.600 1276 736.200 Z"/>
<path d="M1276 721.200 V727.800 M1272.700 724.500 H1279.300" stroke="#1a7fa0" stroke-width="1.200"/>
</g>
</g>
<g id="annot" fill="#f23645">
<circle cx="1254.300" cy="647.600" r="16"/>
<path d="M1255 670.200 L1259.800 670.200 L1264.100 723.400 L1270.600 722.900 Q1272.200 722.900 1271.500 724.400 L1263.900 750.300 Q1263.300 751.600 1262.600 750.300 L1251.500 725.800 Q1250.900 724.300 1252.500 724.300 L1259.300 723.900 Z"/>
<circle cx="1298.500" cy="238.400" r="16.400"/>
<path d="M1299.600 135.800 L1309.800 163.800 L1302.400 163.200 L1301.800 217.600 L1295.200 217.600 L1296.800 163.200 L1289 163.800 Z"/>
</g>
<text x="1254.400" y="655.400" font-family="Liberation Sans, sans-serif" font-size="22" font-weight="bold" fill="#fff" text-anchor="middle">1</text>
<text x="1298.600" y="246.400" font-family="Liberation Sans, sans-serif" font-size="22" font-weight="bold" fill="#fff" text-anchor="middle">2</text>
</svg>
<div id="winL"></div><div id="winT"></div><div id="winR"></div><div id="winB"></div>
</body>
</html>
